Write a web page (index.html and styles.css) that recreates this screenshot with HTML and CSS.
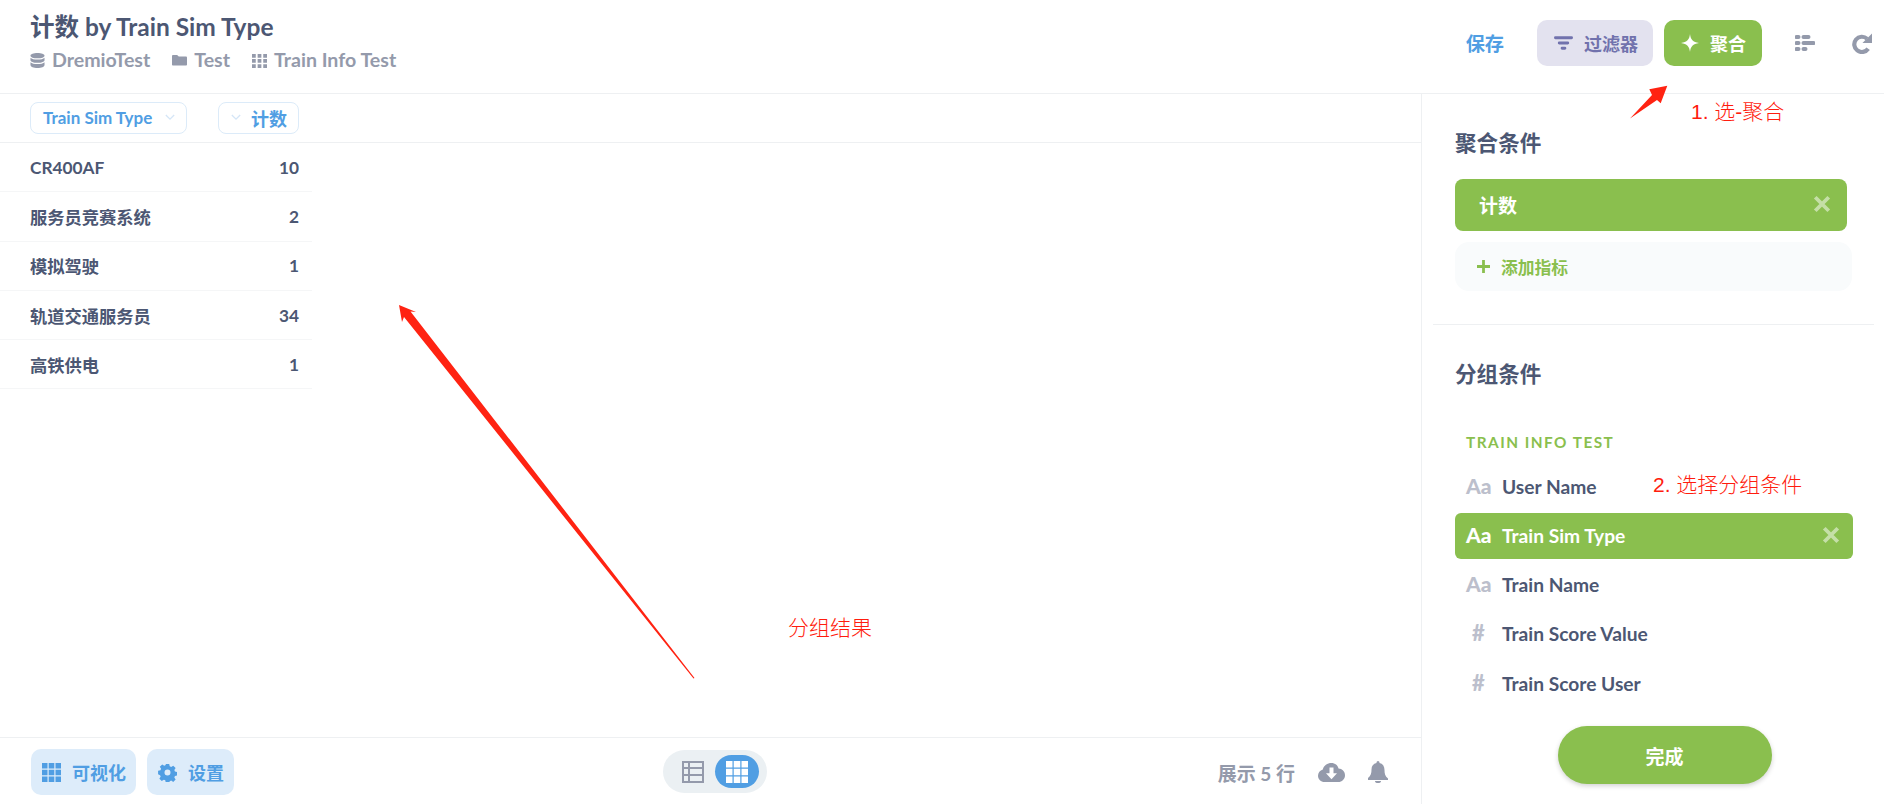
FILE: index.html
```html
<!DOCTYPE html>
<html lang="en">
  <head>
    <meta charset="UTF-8" />
    <title>计数 by Train Sim Type</title>
    <link rel="stylesheet" href="styles.css">
  </head>

  <body>
    <div class="app">
      <!-- Top bar -->
      <header class="top_bar">
        <div class="title_block">
          <h1 class="page_title">计数 by Train Sim Type</h1>
          <div class="crumbs">
            <span class="crumb">
              <svg class="crumb_icon" viewBox="0 0 16 16"><path d="M8 0C3.8 0 .5 1.2.5 2.800S3.800 5.600 8 5.600s7.500-1.200 7.500-2.800S12.200 0 8 0zM.5 5v2.600c0 1.500 3.300 2.800 7.500 2.800s7.500-1.300 7.500-2.800V5c-1.300 1.300-4.200 2-7.500 2S1.800 6.300.5 5zm0 4.800v2.900C.5 14.500 3.800 16 8 16s7.500-1.500 7.500-3.300V9.800c-1.300 1.300-4.200 2-7.500 2s-6.200-.7-7.500-2z"/></svg>
              DremioTest
            </span>
            <span class="crumb">
              <svg class="crumb_icon" viewBox="0 0 16 16"><path d="M0 3.200C0 2.500.5 2 1.200 2h4.300l1.700 1.700h7.600c.7 0 1.200.5 1.200 1.200v7.300c0 .7-.5 1.200-1.200 1.200H1.200C.5 13.400 0 12.900 0 12.200z"/></svg>
              Test
            </span>
            <span class="crumb">
              <svg class="crumb_icon" viewBox="0 0 16 16"><path d="M0 1h4v4H0zM6 1h4v4H6zM12 1h4v4h-4zM0 6.500h4v4H0zM6 6.500h4v4H6zM12 6.500h4v4h-4zM0 12h4v4H0zM6 12h4v4H6zM12 12h4v4h-4z"/></svg>
              Train Info Test
            </span>
          </div>
        </div>
        <div class="top_actions">
          <span class="save_link">保存</span>
          <button class="btn btn_filter">
            <svg class="btn_icon" viewBox="0 0 20 14"><path d="M1.500 0h17a1.500 1.500 0 0 1 0 3h-17a1.500 1.500 0 0 1 0-3zM5.500 5.500h9a1.500 1.500 0 0 1 0 3h-9a1.500 1.500 0 0 1 0-3zM8.500 11h3a1.500 1.500 0 0 1 0 3h-3a1.500 1.500 0 0 1 0-3z"/></svg>
            过滤器
          </button>
          <button class="btn btn_summarize">
            <svg class="btn_icon" viewBox="0 0 18 18"><path d="M9 0c.7 5.600 2.800 8 9 9-6.200 1-8.300 3.400-9 9-.7-5.600-2.800-8-9-9 6.200-1 8.300-3.400 9-9z"/></svg>
            聚合
          </button>
          <svg class="tool_icon tool_contract" viewBox="0 0 20 16"><path d="M1.500 0h2a1.500 1.500 0 0 1 0 4h-2a1.500 1.500 0 0 1 0-4zM8.500 0h5a1.500 1.500 0 0 1 0 4h-5a1.500 1.500 0 0 1 0-4zM1.500 6h2a1.500 1.500 0 0 1 0 4h-2a1.500 1.500 0 0 1 0-4zM8.500 6h10a1.500 1.500 0 0 1 0 4h-10a1.500 1.500 0 0 1 0-4zM1.500 12h2a1.500 1.500 0 0 1 0 4h-2a1.500 1.500 0 0 1 0-4zM8.500 12h2a1.500 1.500 0 0 1 0 4h-2a1.500 1.500 0 0 1 0-4z"/></svg>
          <svg class="tool_icon tool_refresh" viewBox="0 0 22 22">
            <path class="refresh_arc" d="M16.800 6.500A8 8 0 1 0 18 17"/>
            <path d="M22 1v10H12z"/>
          </svg>
        </div>
      </header>

      <div class="work_area">
        <div class="result_column">
          <!-- Column pills -->
          <div class="col_heads">
            <span class="col_pill col_pill_dim">
              Train Sim Type
              <svg class="chev" viewBox="0 0 12 8"><path d="M1 1l5 5 5-5"/></svg>
            </span>
            <span class="col_pill col_pill_metric">
              <svg class="chev" viewBox="0 0 12 8"><path d="M1 1l5 5 5-5"/></svg>
              计数
            </span>
          </div>

          <!-- Result rows -->
          <div class="result_table">
            <div class="result_row"><span>CR400AF</span><span>10</span></div>
            <div class="result_row"><span>服务员竞赛系统</span><span>2</span></div>
            <div class="result_row"><span>模拟驾驶</span><span>1</span></div>
            <div class="result_row"><span>轨道交通服务员</span><span>34</span></div>
            <div class="result_row"><span>高铁供电</span><span>1</span></div>
          </div>

          <!-- Bottom bar -->
          <footer class="bottom_bar">
            <div class="bottom_left">
              <button class="btn btn_soft btn_viz">
                <svg class="btn_icon_lg" viewBox="0 0 19 19"><path d="M0 0h5.500v5.500H0zM6.700 0h5.600v5.500H6.700zM13.500 0H19v5.500h-5.500zM0 6.700h5.500v5.600H0zM6.700 6.700h5.600v5.600H6.700zM13.500 6.700H19v5.600h-5.500zM0 13.500h5.500V19H0zM6.700 13.500h5.600V19H6.700zM13.500 13.500H19V19h-5.500z"/></svg>
                可视化
              </button>
              <button class="btn btn_soft btn_settings">
                <svg class="btn_icon_lg" viewBox="0 0 20 20"><path fill-rule="evenodd" d="M8 0h4l.6 2.800 1.700.7 2.400-1.500 2.800 2.800-1.500 2.400.7 1.700 2.800.6v4l-2.800.6-.7 1.700 1.500 2.400-2.800 2.800-2.400-1.500-1.700.7L12 22H8l-.6-2.800-1.700-.7-2.400 1.500-2.800-2.800 1.500-2.400-.7-1.700L-1 12V8l2.800-.6.7-1.700L1 3.300l2.800-2.800 2.400 1.500 1.700-.7zM10 6.500a3.500 3.500 0 1 0 0 7 3.500 3.500 0 0 0 0-7z" transform="translate(1 1) scale(.9)"/></svg>
                设置
              </button>
            </div>
            <div class="view_toggle">
              <span class="toggle_item">
                <svg class="toggle_icon" viewBox="0 0 22 22"><path fill-rule="evenodd" d="M0 0h22v22H0zM2 2v4h4V2zm6 0v4h12V2zM2 8v5h4V8zm6 0v5h12V8zM2 15v5h4v-5zm6 0v5h12v-5z"/></svg>
              </span>
              <span class="toggle_item toggle_active">
                <svg class="toggle_icon" viewBox="0 0 22 22"><path d="M0 0h6.500v6.500H0zM7.700 0h6.600v6.500H7.700zM15.500 0H22v6.500h-6.500zM0 7.700h6.500v6.600H0zM7.700 7.700h6.600v6.600H7.700zM15.500 7.700H22v6.600h-6.500zM0 15.500h6.500V22H0zM7.700 15.500h6.600V22H7.700zM15.500 15.500H22V22h-6.500z"/></svg>
              </span>
            </div>
            <div class="bottom_right">
              <span class="row_count">展示 5 行</span>
              <svg class="cloud_icon" viewBox="0 0 27 19"><path fill-rule="evenodd" d="M13.500 0c3.500 0 6.300 2.300 7 5.500 3.600.2 6.500 3 6.500 6.700 0 3.800-3 6.800-6.800 6.800H6.500C3 19 0 16.200 0 12.700c0-3 2-5.500 4.800-6.300C5.800 2.700 9.300 0 13.500 0zM11.500 4.500v5.800H8l5.500 6 5.500-6h-3.500V4.500z"/></svg>
              <svg class="bell_icon" viewBox="0 0 20 22"><path d="M8.500 1.500a1.500 1.500 0 0 1 3 0v.6c3.200.7 5 3.300 5 6.900 0 3.800.6 6.300 3.500 8.500v1.500H0V17c2.900-2.200 3.500-4.700 3.500-8.500 0-3.300 1.800-5.700 5-6.400zM7 20h6a3 2 0 0 1-6 0z"/></svg>
            </div>
          </footer>
        </div>

        <!-- Summarize sidebar -->
        <aside class="side_panel">
          <section class="metric_section">
            <h2 class="side_title">聚合条件</h2>
            <div class="metric_pill">
              <span>计数</span>
              <svg class="close_x" viewBox="0 0 16 16"><path d="M2 2l12 12M14 2L2 14"/></svg>
            </div>
            <div class="add_metric">
              <svg class="plus_icon" viewBox="0 0 14 14"><path d="M5.500 0h3v5.500H14v3H8.500V14h-3V8.500H0v-3h5.500z"/></svg>
              添加指标
            </div>
          </section>

          <section class="group_section">
            <h2 class="side_title">分组条件</h2>
            <div class="table_label">Train Info Test</div>
            <div class="field_row"><span class="field_type">Aa</span>User Name</div>
            <div class="field_row field_selected">
              <span class="field_type">Aa</span>Train Sim Type
              <svg class="close_x" viewBox="0 0 16 16"><path d="M2 2l12 12M14 2L2 14"/></svg>
            </div>
            <div class="field_row"><span class="field_type">Aa</span>Train Name</div>
            <div class="field_row"><span class="field_type field_hash">#</span>Train Score Value</div>
            <div class="field_row"><span class="field_type field_hash">#</span>Train Score User</div>
          </section>

          <div class="done_wrap">
            <button class="done_btn">完成</button>
          </div>
        </aside>
      </div>

      <!-- Red notes drawn over the screenshot -->
      <svg class="note_arrows" viewBox="0 0 1884 804">
        <path d="M1630 118.500L1652 95 1649.300 89.300 1667.300 85.700 1660.700 103.300 1657 100z"/>
        <path d="M399 305L416 312 410.500 311.500 694.500 678 693.500 678.500 404 317 402 322z"/>
      </svg>
      <span class="note note_one">1. 选-聚合</span>
      <span class="note note_two">2. 选择分组条件</span>
      <span class="note note_three">分组结果</span>
    </div>
  </body>
</html>
```

FILE: styles.css
```css
* {
  box-sizing: border-box;
}

body {
  margin: 0;
  background: #fff;
  color: #4c5773;
  font-family: Lato, "Noto Sans CJK SC", sans-serif;
  font-weight: 700;
}

button {
  font-family: inherit;
  font-weight: 700;
  border: 0;
}

.app {
  position: relative;
  width: 1884px;
  height: 804px;
  overflow: hidden;
  display: flex;
  flex-direction: column;
}

/* Top bar */
.top_bar {
  flex: 0 0 94px;
  display: flex;
  justify-content: space-between;
  align-items: flex-start;
  padding: 0 12px 0 30px;
  border-bottom: 1px solid #eef0f2;
}

.page_title {
  margin: 13px 0 0;
  font-size: 24.5px;
  line-height: 28px;
  font-weight: 700;
}

.crumbs {
  display: flex;
  gap: 22px;
  margin-top: 8px;
  font-size: 19.6px;
  line-height: 22px;
  color: #949aab;
}

.crumb {
  display: flex;
  align-items: center;
  gap: 7px;
}

.crumb_icon {
  width: 15px;
  height: 15px;
  fill: #949aab;
}

.top_actions {
  display: flex;
  align-items: center;
  margin-top: 20px;
  height: 46px;
}

.save_link {
  color: #509ee3;
  font-size: 19.2px;
  margin-right: 33px;
}

.btn {
  display: flex;
  align-items: center;
  height: 46px;
  border-radius: 10px;
  font-size: 18px;
}

.btn_filter {
  width: 116px;
  padding-left: 17px;
  gap: 11px;
  background: #e3e2ef;
  color: #7172ad;
}

.btn_filter .btn_icon {
  width: 19px;
  height: 14px;
  fill: #7172ad;
}

.btn_summarize {
  width: 98px;
  margin-left: 11px;
  padding-left: 17px;
  gap: 11px;
  background: #8abf4e;
  color: #fff;
}

.btn_summarize .btn_icon {
  width: 18px;
  height: 18px;
  fill: #fff;
}

.tool_icon {
  fill: #949aab;
}

.refresh_arc {
  fill: none;
  stroke: #949aab;
  stroke-width: 4.4;
}

.tool_contract {
  width: 20px;
  height: 16px;
  margin-left: 33px;
}

.tool_refresh {
  width: 21px;
  height: 22px;
  margin-left: 36px;
}

.work_area {
  flex: 1;
  display: flex;
  min-height: 0;
}

.result_column {
  width: 1422px;
  display: flex;
  flex-direction: column;
  border-right: 1px solid #eef0f2;
}

/* Column pills */
.col_heads {
  flex: 0 0 49px;
  display: flex;
  align-items: center;
  gap: 31px;
  padding: 0 0 1px 30px;
  border-bottom: 1px solid #eef0f2;
  color: #509ee3;
}

.col_pill {
  display: flex;
  align-items: center;
  height: 32px;
  border: 1px solid #dcebf9;
  border-radius: 8px;
  font-size: 17px;
}

.col_pill_dim {
  width: 157px;
  padding-left: 12px;
  gap: 13px;
}

.col_pill_metric {
  width: 81px;
  padding-left: 12px;
  gap: 10px;
  font-size: 18px;
}

.chev {
  width: 10px;
  height: 7px;
  fill: none;
  stroke: #d5e6f7;
  stroke-width: 1.6;
}

/* Result rows */
.result_table {
  flex: 1;
  width: 312px;
}

.result_row {
  display: flex;
  justify-content: space-between;
  align-items: center;
  height: 49.3px;
  padding: 0 13px 0 30px;
  border-bottom: 1px solid #f5f6f7;
  font-size: 17.28px;
}

/* Bottom bar */
.bottom_bar {
  flex: 0 0 67px;
  display: flex;
  align-items: flex-start;
  padding: 11px 33px 0 31px;
  border-top: 1px solid #eef0f2;
}

.bottom_left {
  display: flex;
  gap: 11px;
  width: 203px;
}

.btn_soft {
  background: #ddecfa;
  color: #509ee3;
  padding-left: 11px;
  font-size: 18px;
}

.btn_viz {
  width: 105px;
  gap: 11px;
}

.btn_settings {
  width: 87px;
  gap: 11px;
}

.btn_icon_lg {
  width: 19px;
  height: 19px;
  fill: #509ee3;
}

.view_toggle {
  display: flex;
  align-items: center;
  width: 104px;
  height: 43px;
  margin: 1px 0 0 429px;
  padding: 0 8px;
  border-radius: 22px;
  background: #ebf0f3;
}

.toggle_item {
  display: flex;
  align-items: center;
  justify-content: center;
  width: 44px;
  height: 33px;
}

.toggle_icon {
  width: 22px;
  height: 22px;
  fill: #949aab;
}

.toggle_active {
  background: #509ee3;
  border-radius: 17px;
}

.toggle_active .toggle_icon {
  fill: #fff;
}

.bottom_right {
  display: flex;
  align-items: center;
  height: 46px;
  margin-left: auto;
  color: #949aab;
  font-size: 19px;
}

.row_count {
  margin-right: 23px;
}

.cloud_icon {
  width: 27px;
  height: 19px;
  fill: #949aab;
}

.bell_icon {
  width: 20px;
  height: 22px;
  margin-left: 23px;
  fill: #949aab;
}

/* Summarize sidebar */
.side_panel {
  flex: 1;
  display: flex;
  flex-direction: column;
  min-width: 0;
}

.side_title {
  margin: 0;
  font-size: 21.6px;
  line-height: 30px;
  font-weight: 700;
}

.metric_section {
  height: 231px;
  margin: 0 10px 0 11px;
  padding: 34px 0 0 22px;
  border-bottom: 1px solid #eef0f2;
}

.metric_pill {
  display: flex;
  align-items: center;
  justify-content: space-between;
  width: 392px;
  height: 52px;
  margin-top: 21px;
  padding: 0 16px 2px 24px;
  background: #8abf4e;
  border-radius: 8px;
  color: #fff;
  font-size: 19px;
}

.close_x {
  width: 18px;
  height: 18px;
  fill: none;
  stroke: #fff;
  stroke-opacity: 0.5;
  stroke-width: 3.4;
}

.add_metric {
  display: flex;
  align-items: center;
  gap: 11px;
  width: 397px;
  height: 49px;
  margin-top: 11px;
  padding: 0 0 0 22px;
  background: #f9fbfc;
  border-radius: 14px;
  color: #8abf4e;
  font-size: 16.8px;
}

.plus_icon {
  width: 13px;
  height: 13px;
  fill: #8abf4e;
}

.group_section {
  flex: 1;
  padding: 34px 0 0 33px;
}

.table_label {
  margin: 43px 0 0 11px;
  color: #8abf4e;
  font-size: 15.36px;
  line-height: 20px;
  letter-spacing: 1.47px;
  text-transform: uppercase;
}

.field_row {
  display: flex;
  align-items: center;
  height: 46px;
  margin: 3.3px 0;
  width: 398px;
  padding: 0 0 2px 11px;
  font-size: 19.2px;
}

.table_label + .field_row {
  margin-top: 12px;
}

.field_type {
  width: 36px;
  margin-bottom: 2px;
  color: #bcbfcc;
  font-size: 21px;
  font-weight: 900;
}

.field_hash {
  padding-left: 6px;
  font-size: 22px;
}

.field_selected {
  justify-content: flex-start;
  background: #8abf4e;
  border-radius: 6px;
  color: #fff;
}

.field_selected .field_type {
  color: #fff;
}

.field_selected .close_x {
  margin-left: auto;
  margin-right: 13px;
}

.done_wrap {
  display: flex;
  justify-content: center;
  padding: 0 0 20px 0;
}

.done_btn {
  width: 214px;
  height: 58px;
  margin-left: 23px;
  border-radius: 29px;
  background: #8abf4e;
  color: #fff;
  font-size: 19px;
  box-shadow: 0 2px 5px rgba(0, 0, 0, 0.18);
}

/* Annotations over the screenshot */
.note_arrows {
  position: absolute;
  left: 0;
  top: 0;
  width: 1884px;
  height: 804px;
  fill: #ff2312;
  pointer-events: none;
}

.note {
  position: absolute;
  color: #ff1c0e;
  font-family: "Liberation Sans", "Noto Sans CJK SC", sans-serif;
  font-weight: 300;
  font-size: 21px;
  line-height: 26px;
  white-space: nowrap;
}

.note_one {
  left: 1691px;
  top: 99px;
}

.note_two {
  left: 1653px;
  top: 472px;
}

.note_three {
  left: 788px;
  top: 615px;
}
```
